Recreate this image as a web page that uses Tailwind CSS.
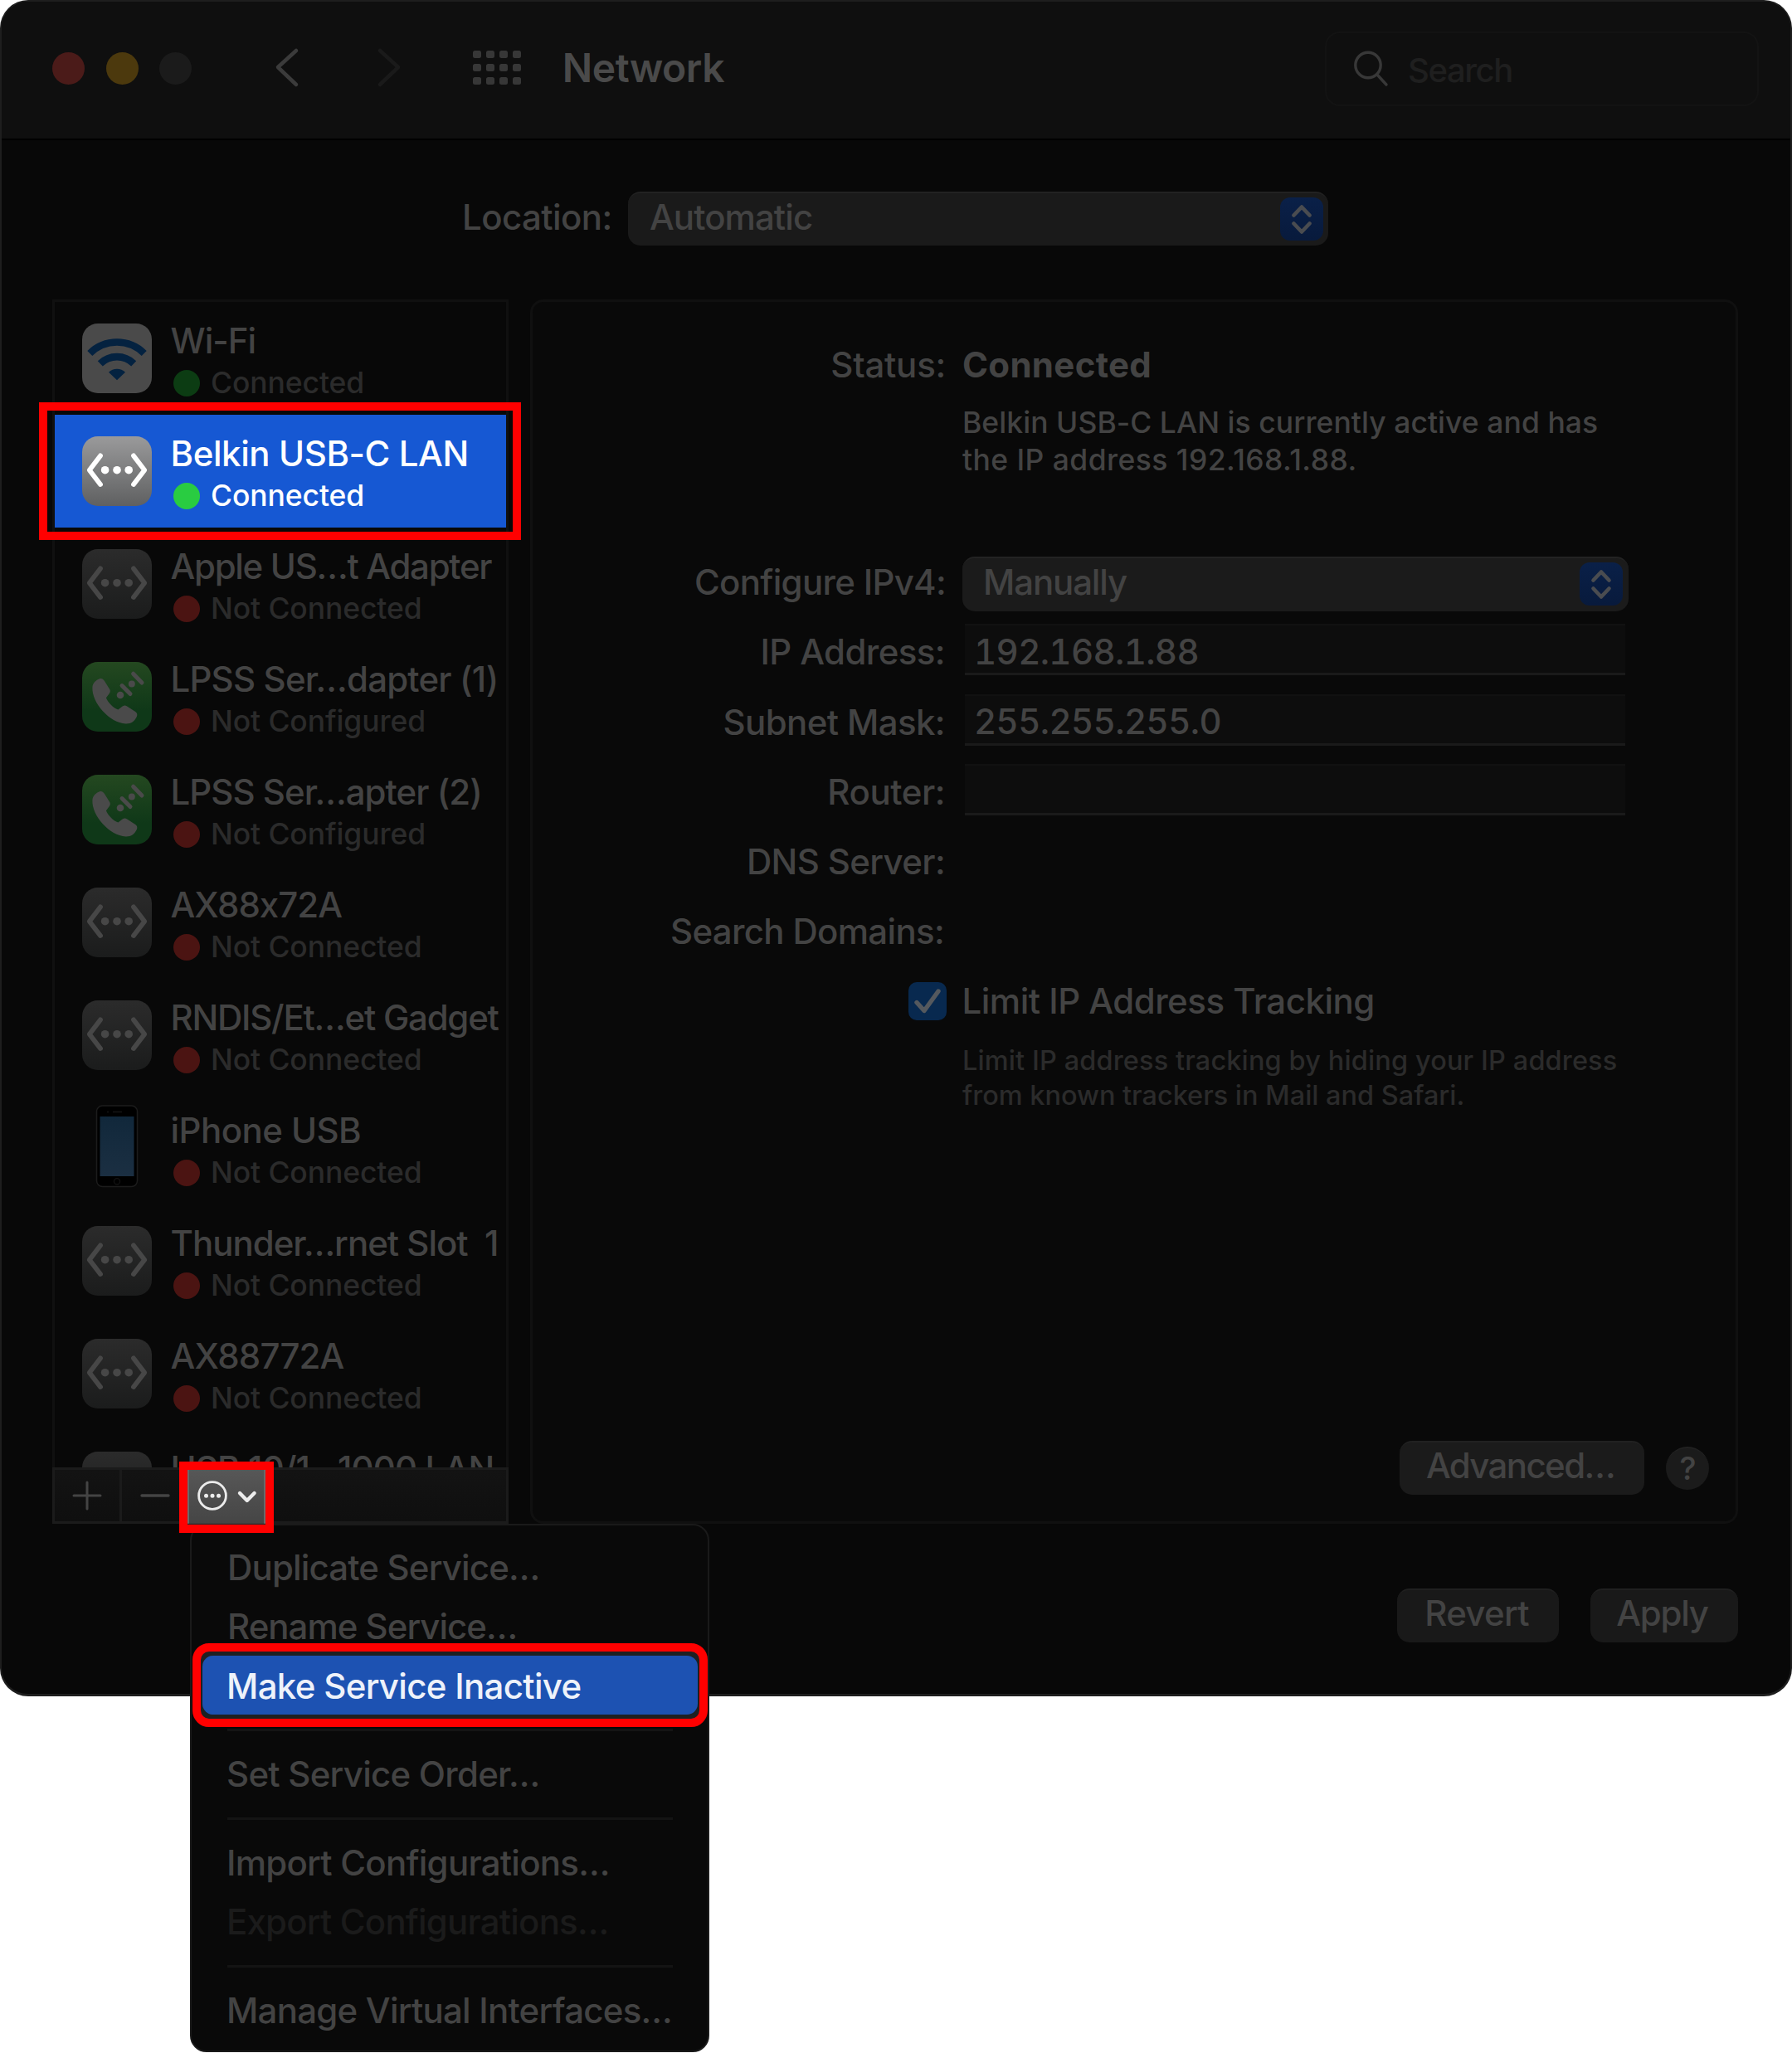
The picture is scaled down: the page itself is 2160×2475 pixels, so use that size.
<!DOCTYPE html>
<html lang="en">
<head>
<meta charset="utf-8">
<title>Network</title>
<script src="https://cdn.jsdelivr.net/npm/@tailwindcss/browser@4"></script>
</head>
<body class="bg-white">
<svg class="absolute size-0">
  <defs>
    <linearGradient id="g-eth" x1="0" y1="0" x2="0" y2="1"><stop offset="0" stop-color="#2b2b2b"/><stop offset="1" stop-color="#1b1c1c"/></linearGradient>
    <linearGradient id="g-eth-on" x1="0" y1="0" x2="0" y2="1"><stop offset="0" stop-color="#9a9a9b"/><stop offset="1" stop-color="#5f6061"/></linearGradient>
    <linearGradient id="g-tel" x1="0" y1="0" x2="0" y2="1"><stop offset="0" stop-color="#244820"/><stop offset="0.7" stop-color="#0f3818"/><stop offset="1" stop-color="#0f3818"/></linearGradient>
    <linearGradient id="g-scr" x1="0" y1="0" x2="0" y2="1"><stop offset="0" stop-color="#11283b"/><stop offset="1" stop-color="#1b2f42"/></linearGradient>
  </defs>
  <symbol id="arrows" viewBox="0 0 84 84">
    <path d="M22 23.4 8.8 40.7 22 58M62 23.4 75.2 40.7 62 58" fill="none" stroke="currentColor" stroke-width="5.8" stroke-linecap="round" stroke-linejoin="round"/>
    <circle cx="27.6" cy="40.7" r="4.8" fill="currentColor"/><circle cx="42" cy="40.7" r="4.8" fill="currentColor"/><circle cx="56.2" cy="40.7" r="4.8" fill="currentColor"/>
  </symbol>
  <symbol id="eth" viewBox="0 0 84 84"><rect width="84" height="84" rx="19" fill="url(#g-eth)"/><use href="#arrows" width="84" height="84"/></symbol>
  <symbol id="ethon" viewBox="0 0 84 84"><rect width="84" height="84" rx="19" fill="url(#g-eth-on)"/><use href="#arrows" width="84" height="84"/></symbol>
  <symbol id="wifi" viewBox="0 0 84 84">
    <rect width="84" height="84" rx="19" fill="#4a4a4a"/>
    <path d="M9.3 36A46.5 46.5 0 0 1 74.7 36M21.8 48.4A28.8 28.8 0 0 1 62.2 48.4" fill="none" stroke="#042240" stroke-width="8.6"/>
    <path d="M42 68.3 32 58.8A14.5 14.5 0 0 1 52 58.8Z" fill="#042240"/>
  </symbol>
  <symbol id="tel" viewBox="0 0 84 84">
    <rect width="84" height="84" rx="19" fill="url(#g-tel)"/>
    <path d="M12.4 30.5C12.8 25.5 16.5 21.8 21 20.2C23.5 19.4 25.3 20.4 26.8 22.8L33.2 33C34.2 34.8 34 36.4 32.8 38L28.9 43.2C31 48.6 37.2 55.2 43.4 57.6L48.6 53.6C50.4 52.2 52 52.1 53.8 53.2L64.2 60C66.4 61.6 66.9 63.6 65.8 66C63.4 71.4 59 74.8 52.5 74.5C33.5 73.5 11.3 49.5 12.4 30.5Z" fill="#4a4a4a"/>
    <circle cx="46" cy="40" r="4.3" fill="#4a4a4a"/><circle cx="59.8" cy="26.4" r="4" fill="#4a4a4a"/>
    <path d="M48 28.6 58 38.6M61.6 14.2 72 25" stroke="#4a4a4a" stroke-width="5" stroke-linecap="round"/>
  </symbol>
  <symbol id="phone" viewBox="0 0 84 100">
    <rect x="17.5" y="1" width="49" height="97.5" rx="7" fill="#000" stroke="#1c1c1c" stroke-width="1.5"/>
    <rect x="21.5" y="14" width="41" height="72" fill="url(#g-scr)"/>
    <path d="M37 8.5h11" stroke="#151515" stroke-width="1.5"/><circle cx="31" cy="8.5" r="1" fill="#151515"/>
    <circle cx="42" cy="92.2" r="3.6" fill="none" stroke="#141414" stroke-width="1.2"/>
  </symbol>
  <symbol id="updown" viewBox="0 0 52 52">
    <path d="M16.5 21.5 26 11.5 35.5 21.5M16.5 31.5 26 41.5 35.5 31.5" fill="none" stroke="#4a4c50" stroke-width="4.6" stroke-linecap="round" stroke-linejoin="round"/>
  </symbol>
</svg>

<div class="relative h-[2475px] w-[2160px] overflow-hidden font-['Inter',sans-serif] text-[42px] leading-[50px] font-[460] whitespace-nowrap text-[#434343] [font-feature-settings:'calt'_0]">

  <!-- Window -->
  <div class="relative flex h-[2045px] flex-col overflow-hidden rounded-[34px] border-x-2 border-t-2 border-b-3 border-[#1e1e1e] bg-[#080808]">
    <header class="flex h-[167px] shrink-0 items-start border-b-2 border-black bg-[#0f0f0f] pl-[61px]">
      <div class="mt-[61px] flex gap-[25.6px]">
        <span class="size-[39px] rounded-full bg-[#4b1b19]"></span>
        <span class="size-[39px] rounded-full bg-[#4c390d]"></span>
        <span class="size-[39px] rounded-full bg-[#1b1b1b]"></span>
      </div>
      <svg class="mt-[54px] ml-[98px] h-[50px] w-[160px]" viewBox="0 0 160 50" fill="none" stroke-width="4.5" stroke-linecap="round" stroke-linejoin="round">
        <path d="M28 5 6 25 28 46" stroke="#3b3b3b"/><path d="M129 5 151 25 129 46" stroke="#1a1a1a"/>
      </svg>
      <div class="mt-[59px] ml-[81px] grid grid-cols-4 gap-x-[6.4px] gap-y-[7px]" id="dots"></div>
      <h1 class="mt-[55px] ml-[50px] text-[48px] leading-[50px] font-semibold tracking-[-0.46px] text-[#4a4a4a]">Network</h1>
      <div class="mt-[36px] mr-[38px] ml-auto flex h-[90px] w-[523px] items-center rounded-[18px] border-2 border-[#131313] pl-[32px]">
        <svg class="size-[44px]" viewBox="0 0 44 44" fill="none" stroke="#383838" stroke-width="3.4" stroke-linecap="round"><circle cx="18" cy="17.5" r="15.2"/><path d="M29 29 40 41"/></svg>
        <span class="ml-[22px] pt-[4px] text-[40px] tracking-[-1.4px] text-[#1f1f1f]">Search</span>
      </div>
    </header>

    <div class="mt-[62px] flex h-[65px] shrink-0 items-center pl-[555px]">
      <span class="w-[178px] pb-[3px] text-right tracking-[-0.57px]">Location:</span>
      <div class="ml-[22px] flex h-[65px] w-[844px] items-center justify-between rounded-[15px] border-t-2 border-[#222] bg-[#1a1a1a] pr-[6px] pl-[26px]">
        <span class="pb-[5px] tracking-[-0.93px]">Automatic</span>
        <svg class="mb-[2px] size-[52px] rounded-[12px] bg-linear-to-b from-[#0a2048] to-[#081a3c]"><use href="#updown"/></svg>
      </div>
    </div>

    <main class="mt-[65px] flex h-[1476px] shrink-0 gap-[26px] pl-[61px]">
      <aside class="flex w-[550px] flex-col">
        <ul id="services" class="h-[1408px] overflow-hidden border-x-3 border-t-3 border-[#101010]"></ul>
        <div class="flex h-[68px] border-3 border-[#1b1b1b] bg-linear-to-b from-[#131313] to-[#0f0f0f]">
          <div class="flex w-[81px] items-center justify-center border-r-3 border-[#1b1b1b]"><svg class="size-[36px]" viewBox="0 0 36 36" stroke="#444" stroke-width="3" stroke-linecap="round"><path d="M2 18h32M18 2v32"/></svg></div>
          <div class="flex w-[80px] items-center justify-center"><svg class="size-[36px]" viewBox="0 0 36 36" stroke="#444" stroke-width="3.4" stroke-linecap="round"><path d="M2 18h32"/></svg></div>
        </div>
      </aside>

      <section class="flex w-[1456px] flex-col rounded-[16px] border-3 border-[#101010] bg-[#090909] pt-[33px]">
        <div class="flex h-[84px] items-center gap-[20px] pt-[2px]">
          <span class="w-[498px] text-right tracking-[-0.25px]">Status:</span>
          <b class="font-bold tracking-[0.3px]">Connected</b>
        </div>
        <p class="mt-[6px] ml-[518px] text-[35.5px] leading-[45.3px] tracking-[0.05px]">Belkin USB-C LAN is currently active and has<br><span class="tracking-[0.43px]">the IP address 192.168.1.88.</span></p>
        <div class="mt-[82px] flex h-[84.2px] items-center gap-[20px]">
          <span class="w-[498px] pt-[1px] text-right tracking-[-0.7px]">Configure IPv4:</span>
          <div class="mt-[5px] flex h-[66px] w-[803px] items-center justify-between rounded-[15px] border-t-2 border-[#232323] bg-[#1b1b1b] pr-[7px] pl-[25px]">
            <span class="pb-[6px] tracking-[-1.14px]">Manually</span>
            <svg class="mb-[2px] size-[52px] rounded-[12px] bg-linear-to-b from-[#0a2048] to-[#081a3c]"><use href="#updown"/></svg>
          </div>
        </div>
        <div class="flex h-[84.2px] items-center gap-[24px]">
          <span class="w-[497px] pt-[1px] text-right tracking-[-0.59px]">IP Address:</span>
          <div class="mb-[5px] flex h-[62px] w-[796px] items-center border-t-2 border-b-3 border-t-[#111] border-b-[#1a1a1a] bg-[#0d0d0d] pt-[6px] pl-[11px] tracking-[-0.65px] tabular-nums">192.168.1.88</div>
        </div>
        <div class="flex h-[84.2px] items-center gap-[24px]">
          <span class="w-[497px] pt-[1px] text-right tracking-[-0.61px]">Subnet Mask:</span>
          <div class="mb-[5px] flex h-[62px] w-[796px] items-center border-t-2 border-b-3 border-t-[#111] border-b-[#1a1a1a] bg-[#0d0d0d] pt-[6px] pl-[11px] tracking-[-0.61px] tabular-nums">255.255.255.0</div>
        </div>
        <div class="flex h-[84.2px] items-center gap-[24px]">
          <span class="w-[497px] pt-[1px] text-right tracking-[-0.45px]">Router:</span>
          <div class="mb-[5px] h-[62px] w-[796px] border-t-2 border-b-3 border-t-[#111] border-b-[#1a1a1a] bg-[#0d0d0d]"></div>
        </div>
        <div class="flex h-[84.2px] w-[497px] items-center justify-end pt-[1px] tracking-[-0.64px]">DNS Server:</div>
        <div class="flex h-[84.2px] w-[496px] items-center justify-end tracking-[-0.68px]">Search Domains:</div>
        <div class="flex h-[84.2px] items-center pl-[453px]">
          <svg class="size-[46px]" viewBox="0 0 46 46"><rect width="46" height="46" rx="10" fill="#08294f"/><path d="M10 24.5 19 34.5 36 11" fill="none" stroke="#55595e" stroke-width="5.4" stroke-linecap="round" stroke-linejoin="round"/></svg>
          <span class="ml-[18.5px] pt-[1px] tracking-[-0.5px]">Limit IP Address Tracking</span>
        </div>
        <p class="mt-[9px] ml-[518px] text-[32.5px] leading-[41.7px] tracking-[0.12px] text-[#2b2b2b]">Limit IP address tracking by hiding your IP address<br><span class="tracking-[-0.03px]">from known trackers in Mail and Safari.</span></p>
        <div class="mt-auto mr-[32px] mb-[32px] flex items-center justify-end gap-[26px]">
          <div class="flex h-[65px] w-[295px] items-center justify-center rounded-[15px] border-t-2 border-[#212121] bg-[#1b1b1b] pr-[4px] pb-[8px] tracking-[-1.62px]">Advanced…</div>
          <div class="flex size-[52px] items-center justify-center rounded-full border-t-2 border-[#212121] bg-[#1b1b1b] pb-[2px] pl-[1px] text-[38px]">?</div>
        </div>
      </section>
    </main>

    <footer class="mt-[78px] mr-[63px] flex shrink-0 justify-end gap-[38px]">
      <div class="flex h-[65px] w-[195px] items-center justify-center rounded-[15px] border-t-2 border-[#202020] bg-[#191919] pr-[3px] pb-[7px] tracking-[-0.7px]">Revert</div>
      <div class="flex h-[65px] w-[178px] items-center justify-center rounded-[15px] border-t-2 border-[#202020] bg-[#191919] pr-[5px] pb-[7px] tracking-[-1.24px]">Apply</div>
    </footer>
  </div>

  <!-- Highlight round the selected service -->
  <div class="absolute top-[485px] left-[47px] h-[166px] w-[581px] border-10 border-[#ff0000]"></div>

  <!-- Action menu -->
  <div class="absolute top-[1837px] left-[229px] flex h-[637px] w-[626px] flex-col rounded-[20px] border-2 border-[#1a1a1a] bg-[#090909] pt-[15px] pl-[43px]">
    <div class="flex h-[71.3px] items-center tracking-[-0.84px]">Duplicate Service…</div>
    <div class="flex h-[71.3px] items-center tracking-[-1px]">Rename Service…</div>
    <div class="h-[71.3px]"></div>
    <div class="mt-[16px] h-[3px] w-[537px] bg-[#141414]"></div>
    <div class="mt-[17px] -ml-px flex h-[71px] items-center tracking-[-0.75px]">Set Service Order…</div>
    <div class="mt-[16px] h-[3px] w-[537px] bg-[#141414]"></div>
    <div class="mt-[17px] -ml-px flex h-[71px] items-center tracking-[-0.75px]">Import Configurations…</div>
    <div class="-ml-px flex h-[71px] items-center tracking-[-0.81px] text-[#1b1b1b]">Export Configurations…</div>
    <div class="mt-[16px] h-[3px] w-[537px] bg-[#141414]"></div>
    <div class="mt-[17px] -ml-px flex h-[71px] items-center tracking-[-0.76px]">Manage Virtual Interfaces…</div>
  </div>
  <div class="absolute top-[1981px] left-[232px] h-[101px] w-[621px] rounded-[20px] border-10 border-[#ff0000] bg-[#1e2022] px-[2px] pt-[5px]">
    <div class="flex h-[71px] items-center rounded-[13px] bg-[#1d52b2] pt-[2px] pl-[29px] tracking-[-0.68px] text-[#eef2fa]">Make Service Inactive</div>
  </div>

  <!-- Action button -->
  <div class="absolute top-[1762px] left-[216px] h-[86px] w-[114px] border-10 border-[#ff0000] bg-linear-to-b from-[#575757] to-[#454545]">
    <svg class="h-[66px] w-[94px]" viewBox="0 0 94 66" fill="none">
      <path d="M93 0v66" stroke="#6a6a6a" stroke-width="2"/><path d="M1 0v66" stroke="#6a6a6a" stroke-width="2"/><path d="M0 65.5H94" stroke="#2a2a2a" stroke-width="1.5"/>
      <circle cx="30" cy="31" r="16.4" stroke="#ececec" stroke-width="2.8"/>
      <circle cx="22.5" cy="31.2" r="2.5" fill="#ececec"/><circle cx="30" cy="31.2" r="2.5" fill="#ececec"/><circle cx="37.5" cy="31.2" r="2.5" fill="#ececec"/>
      <path d="M63 28 71.8 37 80.6 28" stroke="#ececec" stroke-width="4.4" stroke-linecap="round" stroke-linejoin="round"/>
    </svg>
  </div>
</div>

<script>
  document.getElementById('dots').innerHTML = '<i class="h-[9px] w-[9.6px] rounded-[2.5px] bg-[#373737]"></i>'.repeat(12);

  // icon, name, tracking of the name, state
  const services = [
    ['wifi', 'Wi-Fi', 'tracking-[-0.97px]', 'Connected'],
    ['ethon', 'Belkin USB-C LAN', 'tracking-[-0.41px]', 'Connected'],
    ['eth', 'Apple US…t Adapter', 'tracking-[-1.3px]', 'Not Connected'],
    ['tel', 'LPSS Ser…dapter (1)', 'tracking-[-0.81px]', 'Not Configured'],
    ['tel', 'LPSS Ser…apter (2)', 'tracking-[-0.96px]', 'Not Configured'],
    ['eth', 'AX88x72A', 'tracking-[-0.96px]', 'Not Connected'],
    ['eth', 'RNDIS/Et…et Gadget', 'tracking-[-1.25px]', 'Not Connected'],
    ['phone', 'iPhone USB', 'tracking-[-0.55px]', 'Not Connected'],
    ['eth', 'Thunder…rnet Slot\u00a0 1', 'tracking-[-1.01px]', 'Not Connected'],
    ['eth', 'AX88772A', 'tracking-[-0.83px]', 'Not Connected'],
    ['eth', 'USB 10/1…1000 LAN', 'tracking-[-0.85px]', 'Not Connected'],
  ];
  document.getElementById('services').innerHTML = services.map(([icon, name, tracking, state]) => {
    const on = icon === 'ethon';
    const dot = on ? 'bg-[#29cc41]' : state === 'Connected' ? 'bg-[#0c3c13]' : 'bg-[#4b1412]';
    const art = icon === 'phone' ? 'mt-[16px] h-[100px]' : 'mt-[26px] h-[84px]';
    return `<li class="flex h-[136px] pl-[33px] ${on ? 'bg-[#1658d3] text-white' : ''}">
      <svg class="w-[84px] shrink-0 ${art} ${on ? 'text-white' : 'text-[#474747]'}"><use href="#${icon}"/></svg>
      <div class="ml-[22.5px] pt-[22px]">
        <div class="${tracking}">${name}</div>
        <div class="mt-[1px] flex items-center text-[35.5px] leading-[50px] tracking-[-0.1px] ${on ? 'text-white' : 'text-[#2b2b2b]'}">
          <span class="ml-[3.5px] size-[32px] rounded-full ${dot}"></span><span class="ml-[13px]">${state}</span>
        </div>
      </div></li>`;
  }).join('');
</script>
</body>
</html>
